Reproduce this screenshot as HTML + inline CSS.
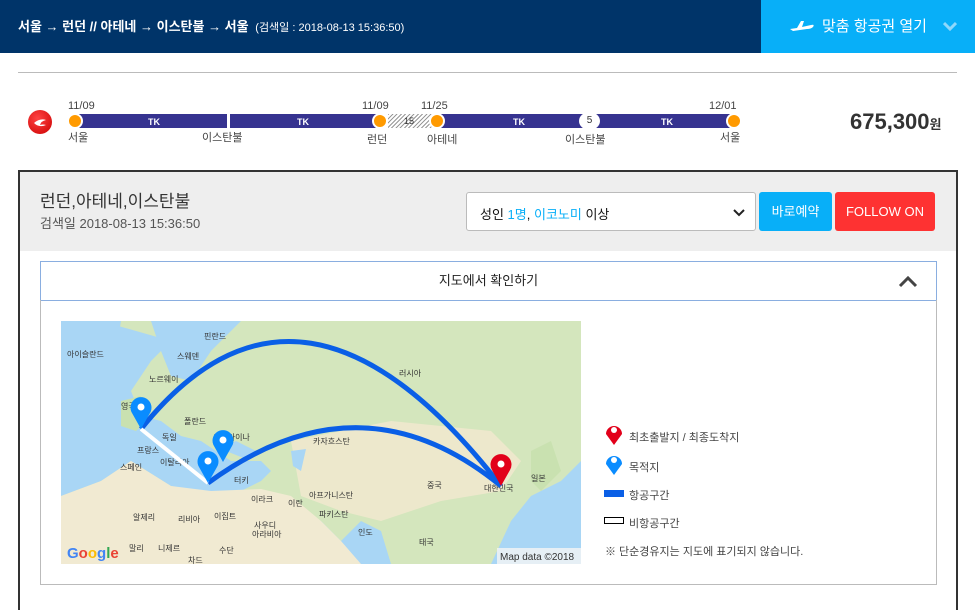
<!DOCTYPE html>
<html><head><meta charset="utf-8"><style>
*{margin:0;padding:0;box-sizing:border-box}
body{width:975px;height:598px;overflow:hidden;background:#fff;font-family:"Liberation Sans","Noto Sans CJK KR",sans-serif;color:#333;position:relative}
.abs{position:absolute}
.hdr{left:0;top:0;width:761px;height:53px;background:#003469;color:#fff}
.hdr2{left:761px;top:0;width:214px;height:53px;background:#08aff8;color:#fff}
.t{font-size:11px;color:#444;white-space:nowrap}
.dot{width:16px;height:16px;border-radius:50%;background:#ff9a00;border:2px solid #fff}
.tk{color:#fff;font-size:9px;font-weight:bold;top:117px}
</style></head><body>
<div class="abs hdr"><div class="abs" style="left:18px;top:16px;font-size:13px;font-weight:bold;white-space:nowrap">서울 → 런던 // 아테네 → 이스탄불 → 서울 <span style="font-weight:normal;font-size:11px">&nbsp;(검색일 : 2018-08-13 15:36:50)</span></div></div>
<div class="abs hdr2">
<svg class="abs" style="left:28px;top:17px" width="26" height="16" viewBox="0 0 26 16"><path d="M1 12 L8 11 L12 4 L15 4 L13 10 L22 8 Q26 7 24 10 Q22 12 18 12 L4 14 Z" fill="#fff"/></svg>
<div class="abs" style="left:61px;top:15px;font-size:15px;white-space:nowrap">맞춤 항공권 열기</div>
<svg class="abs" style="left:182px;top:21px" width="14" height="10"><path d="M1 2 L7 8 L13 2" stroke="#8fd8fb" stroke-width="3" fill="none"/></svg>
</div>
<div class="abs" style="left:18px;top:72px;width:939px;height:1px;background:#bbb"></div>
<div class="abs" style="left:28px;top:110px;width:24px;height:24px;border-radius:50%;background:radial-gradient(circle at 40% 35%,#f44,#c00)"></div>
<svg class="abs" style="left:31px;top:114px" width="18" height="16"><path d="M3 9 Q9 4 15 6 Q10 7 9 11 Q12 10 15 11 Q8 14 3 9Z" fill="#fff"/></svg>
<div class="abs" style="left:76px;top:114px;width:151px;height:14px;background:#363390"></div>
<div class="abs" style="left:230px;top:114px;width:150px;height:14px;background:#363390"></div>
<div class="abs" style="left:388px;top:114px;width:44px;height:14px;background:repeating-linear-gradient(135deg,#999 0 1px,#fff 1px 3px)"></div>
<div class="abs" style="left:437px;top:114px;width:297px;height:14px;background:#363390"></div>
<div class="abs dot" style="left:67px;top:113px"></div>
<div class="abs dot" style="left:372px;top:113px"></div>
<div class="abs dot" style="left:429px;top:113px"></div>
<div class="abs dot" style="left:726px;top:113px"></div>
<div class="abs" style="left:579px;top:112px;width:21px;height:18px;border-radius:50%;background:#fff;font-size:10px;text-align:center;line-height:18px">5</div>
<div class="abs" style="left:404px;top:116px;font-size:9px;color:#333">15</div>
<div class="abs tk" style="left:148px">TK</div><div class="abs tk" style="left:297px">TK</div><div class="abs tk" style="left:513px">TK</div><div class="abs tk" style="left:661px">TK</div>
<div class="abs t" style="left:68px;top:100px">11/09</div><div class="abs t" style="left:362px;top:100px">11/09</div><div class="abs t" style="left:421px;top:100px">11/25</div><div class="abs t" style="left:709px;top:100px">12/01</div>
<div class="abs t" style="left:68px;top:129px">서울</div><div class="abs t" style="left:202px;top:129px">이스탄불</div><div class="abs t" style="left:367px;top:131px">런던</div><div class="abs t" style="left:427px;top:131px">아테네</div><div class="abs t" style="left:565px;top:131px">이스탄불</div><div class="abs t" style="left:720px;top:129px">서울</div>
<div class="abs" style="left:850px;top:109px;font-size:22px;font-weight:bold;color:#333">675,300<span style="font-size:13px">원</span></div>
<div class="abs" style="left:18px;top:170px;width:940px;height:440px;border:2px solid #333;border-bottom:none"></div>
<div class="abs" style="left:20px;top:172px;width:936px;height:79px;background:#eee"></div>
<div class="abs" style="left:40px;top:187px;font-size:17px;color:#333">런던,아테네,이스탄불</div>
<div class="abs" style="left:40px;top:213px;font-size:13px;color:#555">검색일 2018-08-13 15:36:50</div>
<div class="abs" style="left:466px;top:192px;width:290px;height:39px;background:#fff;border:1px solid #bbb;border-radius:3px;font-size:13px;padding:11px 0 0 13px;color:#111">성인 <span style="color:#08aff8">1명</span>, <span style="color:#08aff8">이코노미</span> 이상
<svg class="abs" style="left:266px;top:15px" width="12" height="9"><path d="M1 2 L6 7 L11 2" stroke="#222" stroke-width="2" fill="none"/></svg></div>
<div class="abs" style="left:759px;top:192px;width:73px;height:39px;background:#08aff8;border-radius:3px;color:#fff;font-size:13px;text-align:center;line-height:39px">바로예약</div>
<div class="abs" style="left:835px;top:192px;width:100px;height:39px;background:#fe3232;border-radius:3px;color:#fff;font-size:13px;text-align:center;line-height:39px">FOLLOW ON</div>
<div class="abs" style="left:40px;top:261px;width:897px;height:40px;border:1px solid #8aaee0;text-align:center;line-height:38px;font-size:13px;color:#222">지도에서 확인하기
<svg class="abs" style="left:857px;top:13px" width="20" height="13"><path d="M2 11 L10 3 L18 11" stroke="#444" stroke-width="3" fill="none"/></svg></div>
<div class="abs" style="left:40px;top:300px;width:897px;height:285px;border:1px solid #bbb;border-top:none"></div>
<svg class="abs" style="left:61px;top:321px" width="520" height="243" viewBox="0 0 520 243" font-family="Liberation Sans, Noto Sans CJK KR, sans-serif" font-size="8" fill="#333">
<rect width="520" height="243" fill="#a9d6f5"/>
<path d="M40 0 L520 0 L520 140 L500 160 L470 175 L450 200 L430 243 L330 243 L320 210 L300 200 L280 220 L260 200 L235 190 L220 200 L190 243 L0 243 L0 175 L40 160 L70 140 L110 165 L140 170 L170 175 L200 160 L210 150 L200 140 L170 140 L140 120 L120 115 L100 100 L80 95 L70 70 L90 40 L110 20 Z" fill="#d4e6bd"/>
<path d="M0 175 L40 160 L70 140 L110 165 L150 170 L200 168 L230 175 L260 200 L280 220 L300 243 L0 243Z" fill="#f1ead2"/>
<path d="M230 120 L330 100 L430 110 L460 140 L440 170 L380 180 L320 200 L280 190 L240 175Z" fill="#ede8cc"/>
<path d="M90 0 L180 0 L150 30 L130 60 L110 55 L100 30Z" fill="#a9d6f5"/>
<path d="M60 80 L80 75 L85 100 L75 110 L60 105Z" fill="#c9e1b0"/>
<path d="M0 0 L60 0 L50 60 L60 100 L40 130 L0 150Z" fill="#a9d6f5"/>
<path d="M160 128 L175 120 L195 130 L185 138Z" fill="#a9d6f5"/>
<path d="M230 130 L245 128 L240 150 L232 145Z" fill="#a9d6f5"/>
<path d="M470 130 L490 120 L500 150 L480 170 L470 160Z" fill="#c9e1b0"/>
<text x="6" y="36">아이슬란드</text><text x="143" y="18">핀란드</text><text x="116" y="38">스웨덴</text><text x="88" y="61">노르웨이</text><text x="60" y="88">영국</text><text x="123" y="103">폴란드</text><text x="101" y="119">독일</text><text x="152" y="119">우크라이나</text><text x="76" y="132">프랑스</text><text x="99" y="144">이탈리아</text><text x="59" y="149">스페인</text><text x="252" y="123">카자흐스탄</text><text x="338" y="55">러시아</text><text x="173" y="162">터키</text><text x="190" y="181">이라크</text><text x="227" y="185">이란</text><text x="248" y="177">아프가니스탄</text><text x="258" y="196">파키스탄</text><text x="366" y="167">중국</text><text x="423" y="170">대한민국</text><text x="470" y="160">일본</text><text x="72" y="199">알제리</text><text x="117" y="201">리비아</text><text x="153" y="198">이집트</text><text x="193" y="207">사우디</text><text x="191" y="216">아라비아</text><text x="297" y="214">인도</text><text x="358" y="224">태국</text><text x="68" y="230">말리</text><text x="97" y="230">니제르</text><text x="158" y="232">수단</text><text x="127" y="242">차드</text>
<path d="M80 108 Q240 -92 440 165" stroke="#0a5fe6" stroke-width="5" fill="none"/>
<path d="M147 162 Q300 50 440 165" stroke="#0a5fe6" stroke-width="5" fill="none"/>
<path d="M80 108 L147 162" stroke="#fff" stroke-width="4"/>
<g fill="#0a8cff"><path d="M80 108 L71 92 A10.5 10.5 0 1 1 89 92Z"/><path d="M162 141 L153 125 A10.5 10.5 0 1 1 171 125Z"/><path d="M147 162 L138 146 A10.5 10.5 0 1 1 156 146Z"/></g>
<path d="M440 165 L431 149 A10.5 10.5 0 1 1 449 149Z" fill="#e2001a"/>
<g fill="#fff"><circle cx="80" cy="86" r="3.5"/><circle cx="162" cy="119" r="3.5"/><circle cx="147" cy="140" r="3.5"/><circle cx="440" cy="143" r="3.5"/></g>
<text x="6" y="237" font-size="15" font-weight="bold"><tspan fill="#4285f4">G</tspan><tspan fill="#ea4335">o</tspan><tspan fill="#fbbc05">o</tspan><tspan fill="#4285f4">g</tspan><tspan fill="#34a853">l</tspan><tspan fill="#ea4335">e</tspan></text>
<rect x="436" y="227" width="84" height="16" fill="#f5f5f5" opacity=".8"/><text x="439" y="239" font-size="10">Map data ©2018</text>
</svg>
<svg class="abs" style="left:604px;top:421px" width="22" height="112"><path d="M10 24 L2 13 A8 8 0 1 1 18 13Z" fill="#e2001a"/><circle cx="10" cy="9" r="3" fill="#fff"/><path d="M10 54 L2 43 A8 8 0 1 1 18 43Z" fill="#0a8cff"/><circle cx="10" cy="39" r="3" fill="#fff"/><rect x="0" y="69" width="20" height="7" fill="#0a5fe6"/><rect x="0.5" y="96.5" width="19" height="6" fill="#fff" stroke="#000"/></svg>
<div class="abs" style="left:629px;top:429px;font-size:11px;color:#444">최초출발지 / 최종도착지</div>
<div class="abs" style="left:629px;top:459px;font-size:11px;color:#444">목적지</div>
<div class="abs" style="left:629px;top:487px;font-size:11px;color:#444">항공구간</div>
<div class="abs" style="left:629px;top:515px;font-size:11px;color:#444">비항공구간</div>
<div class="abs" style="left:605px;top:543px;font-size:11px;color:#444">※ 단순경유지는 지도에 표기되지 않습니다.</div>
</body></html>
